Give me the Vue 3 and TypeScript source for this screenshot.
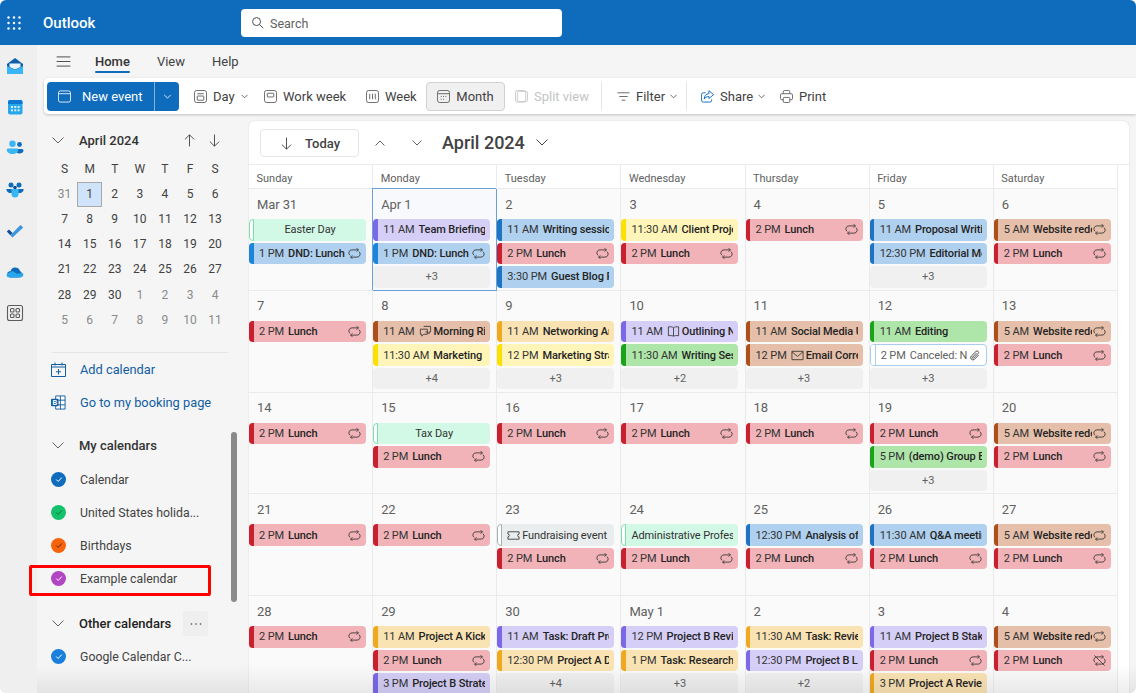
<script setup lang="ts">
type Kind = 'red' | 'blue' | 'sky' | 'purple' | 'brown' | 'yellow' | 'amber' | 'green' | 'holiday' | 'grey' | 'cancel'
type Ev = { k: Kind; t?: string; n: string; r?: 'loop' | 'off' | 'clip'; ic?: string; mid?: boolean }
type Day = { d: string; ev: Ev[]; more?: number; sel?: boolean }

const loopPath = 'M9.3 1.2 11.2 3.1 9.3 5M11.2 3.1H4.300a3.300 3.300 0 0 0-2.100 5.900M4.700 12.800 2.800 10.900l1.900-1.900M2.800 10.900h6.900a3.300 3.300 0 0 0 2.100-5.900'
const icons: Record<string, string> = {
  loop: loopPath,
  off: loopPath + 'M1.500 1.500l11 11',
  clip: 'M11.5 6.5 7 11a2.4 2.4 0 0 1-3.4-3.4l5-5a1.6 1.6 0 0 1 2.3 2.3l-5 5a.8.8 0 0 1-1.1-1.1l4.4-4.4',
  chat: 'M5 1.5h7.5v6H11v2L9 7.5H7M1.5 4.5H9v5.500H5L3 12V9.999H1.500z',
  book: 'M7 3v9M7 3C6 2 4 1.800 1.500 2v9.500c2.500-.2 4.500 0 5.500.5 1-.5 3-.7 5.500-.5V2C10 1.800 8 2 7 3z',
  mail: 'M1 2.500h12v9H1zM1 3l6 5 6-5',
  ticket: 'M1 3h12v2.500a1.500 1.500 0 0 0 0 3V11H1V8.500a1.500 1.500 0 0 0 0-3z',
}

const lunch: Ev = { k: 'red', t: '2 PM', n: 'Lunch', r: 'loop' }
const site: Ev = { k: 'brown', t: '5 AM', n: 'Website redesign', r: 'loop' }
const dnd: Ev = { k: 'sky', t: '1 PM', n: 'DND: Lunch', r: 'loop' }

const days: Day[] = [
  { d: 'Mar 31', ev: [{ k: 'holiday', n: 'Easter Day', mid: true }, dnd] },
  { d: 'Apr 1', sel: true, ev: [{ k: 'purple', t: '11 AM', n: 'Team Briefing' }, dnd], more: 3 },
  { d: '2', ev: [{ k: 'blue', t: '11 AM', n: 'Writing session' }, lunch, { k: 'blue', t: '3:30 PM', n: 'Guest Blog Post' }] },
  { d: '3', ev: [{ k: 'yellow', t: '11:30 AM', n: 'Client Project' }, lunch] },
  { d: '4', ev: [lunch] },
  { d: '5', ev: [{ k: 'blue', t: '11 AM', n: 'Proposal Writing' }, { k: 'blue', t: '12:30 PM', n: 'Editorial Meeting' }], more: 3 },
  { d: '6', ev: [site, lunch] },

  { d: '7', ev: [lunch] },
  { d: '8', ev: [{ k: 'brown', t: '11 AM', ic: 'chat', n: 'Morning Ritual' }, { k: 'yellow', t: '11:30 AM', n: 'Marketing Sync' }], more: 4 },
  { d: '9', ev: [{ k: 'amber', t: '11 AM', n: 'Networking Analysis' }, { k: 'yellow', t: '12 PM', n: 'Marketing Strategy' }], more: 3 },
  { d: '10', ev: [{ k: 'purple', t: '11 AM', ic: 'book', n: 'Outlining New' }, { k: 'green', t: '11:30 AM', n: 'Writing Session' }], more: 2 },
  { d: '11', ev: [{ k: 'brown', t: '11 AM', n: 'Social Media Update' }, { k: 'brown', t: '12 PM', ic: 'mail', n: 'Email Correspondence' }], more: 3 },
  { d: '12', ev: [{ k: 'green', t: '11 AM', n: 'Editing' }, { k: 'cancel', t: '2 PM', n: 'Canceled: New', r: 'clip' }], more: 3 },
  { d: '13', ev: [site, lunch] },

  { d: '14', ev: [lunch] },
  { d: '15', ev: [{ k: 'holiday', n: 'Tax Day', mid: true }, lunch] },
  { d: '16', ev: [lunch] },
  { d: '17', ev: [lunch] },
  { d: '18', ev: [lunch] },
  { d: '19', ev: [lunch, { k: 'green', t: '5 PM', n: '(demo) Group Event' }], more: 3 },
  { d: '20', ev: [site, lunch] },

  { d: '21', ev: [lunch] },
  { d: '22', ev: [lunch] },
  { d: '23', ev: [{ k: 'grey', ic: 'ticket', n: 'Fundraising event' }, lunch] },
  { d: '24', ev: [{ k: 'holiday', n: 'Administrative Professionals Day' }, lunch] },
  { d: '25', ev: [{ k: 'blue', t: '12:30 PM', n: 'Analysis of' }, lunch] },
  { d: '26', ev: [{ k: 'blue', t: '11:30 AM', n: 'Q&A meeting' }, lunch] },
  { d: '27', ev: [site, lunch] },

  { d: '28', ev: [lunch] },
  { d: '29', ev: [{ k: 'amber', t: '11 AM', n: 'Project A Kickoff' }, lunch, { k: 'purple', t: '3 PM', n: 'Project B Strategy' }] },
  { d: '30', ev: [{ k: 'purple', t: '11 AM', n: 'Task: Draft Proposal' }, { k: 'amber', t: '12:30 PM', n: 'Project A Design' }], more: 4 },
  { d: 'May 1', ev: [{ k: 'purple', t: '12 PM', n: 'Project B Review' }, { k: 'amber', t: '1 PM', n: 'Task: Research competitors' }], more: 3 },
  { d: '2', ev: [{ k: 'amber', t: '11:30 AM', n: 'Task: Review' }, { k: 'purple', t: '12:30 PM', n: 'Project B Launch' }], more: 2 },
  { d: '3', ev: [{ k: 'purple', t: '11 AM', n: 'Project B Stakeholder' }, lunch, { k: 'amber', t: '3 PM', n: 'Project A Review' }] },
  { d: '4', ev: [site, { ...lunch, r: 'off' }] },
]

const weekdays = ['Sunday', 'Monday', 'Tuesday', 'Wednesday', 'Thursday', 'Friday', 'Saturday']
const miniHead = ['S', 'M', 'T', 'W', 'T', 'F', 'S']
const mini = [
  31, 1, 2, 3, 4, 5, 6, 7, 8, 9, 10, 11, 12, 13, 14, 15, 16, 17, 18, 19, 20,
  21, 22, 23, 24, 25, 26, 27, 28, 29, 30, 1, 2, 3, 4, 5, 6, 7, 8, 9, 10, 11,
]
const outside = (i: number) => i === 0 || i > 30

const myCals = [
  { name: 'Calendar', color: '#0f6cbd', tick: '#fff' },
  { name: 'United States holida...', color: '#13c16a', tick: '#173' },
  { name: 'Birthdays', color: '#f7630c', tick: '#522' },
  { name: 'Example calendar', color: '#b146c2', tick: '#fff' },
]
</script>

<template>
  <div class="app">
    <header class="topbar">
      <svg class="waffle" viewBox="0 0 14 14" fill="#fff">
        <template v-for="y in [1.500, 7, 12.500]" :key="y">
          <circle v-for="x in [1.500, 7, 12.500]" :key="x" :cx="x" :cy="y" r="1.200" />
        </template>
      </svg>
      <span class="brand">Outlook</span>
      <div class="search">
        <svg viewBox="0 0 14 14" fill="none" stroke="#424242"><circle cx="6" cy="6" r="4.300" /><path d="m9.200 9.200 4 4" /></svg>
        <span>Search</span>
      </div>
    </header>

    <div class="body">
      <nav class="rail">
        <div class="rail-item">
          <svg viewBox="0 0 18 18">
            <path d="M1 7 9 1l8 6v8.500a1.500 1.500 0 0 1-1.500 1.500h-13A1.500 1.500 0 0 1 1 15.500z" fill="#0f5fa8" />
            <path d="M3.500 6.500h11V10L9 12.500 3.500 10z" fill="#e8f3fc" />
            <path d="M1 9l8 4 8-4v6.500a1.500 1.500 0 0 1-1.500 1.500h-13A1.500 1.500 0 0 1 1 15.500z" fill="#38b6f5" />
          </svg>
        </div>
        <div class="rail-item">
          <svg viewBox="0 0 18 18">
            <rect x="2" y="2" width="14.500" height="14.500" rx="2" fill="#28a8ea" />
            <path d="M2 6V4a2 2 0 0 1 2-2h10.500a2 2 0 0 1 2 2v2z" fill="#0f78d4" />
            <g fill="#d8effc"><rect x="5" y="8" width="2" height="2" /><rect x="8.300" y="8" width="2" height="2" /><rect x="11.600" y="8" width="2" height="2" /><rect x="5" y="11.300" width="2" height="2" /><rect x="8.300" y="11.300" width="2" height="2" /><rect x="11.600" y="11.300" width="2" height="2" /></g>
          </svg>
        </div>
        <div class="rail-item">
          <svg viewBox="0 0 18 18">
            <circle cx="6.500" cy="4.800" r="3.200" fill="#38b6f5" />
            <circle cx="13.500" cy="5.500" r="2.400" fill="#0f6cbd" />
            <path d="M10 10h6a1.500 1.500 0 0 1 1.500 1.500c0 2-2 3-4 3s-3-.8-3.500-2z" fill="#0f6cbd" />
            <path d="M2 9.500h9a1.300 1.300 0 0 1 1.300 1.300c0 2.500-2.500 4.200-5.800 4.200S.800 13.300.800 10.800A1.300 1.300 0 0 1 2 9.500z" fill="#38b6f5" />
          </svg>
        </div>
        <div class="rail-item">
          <svg viewBox="0 0 18 18">
            <circle cx="5" cy="4" r="2.500" fill="#0f6cbd" />
            <circle cx="13" cy="4" r="2.500" fill="#0f6cbd" />
            <path d="M1 8h16c.5 0 .8.400.6 1-.5 1.500-1.500 2.500-3 3H3.400C2 11.500 1 10.500.4 9c-.2-.6.100-1 .6-1z" fill="#0f6cbd" />
            <path d="M5.500 8h7v5a3.500 3.500 0 0 1-7 0z" fill="#38b6f5" />
            <circle cx="9" cy="6.500" r="1.800" fill="#0a4f96" />
          </svg>
        </div>
        <div class="rail-item">
          <svg viewBox="0 0 18 18">
            <path d="M.800 9.500 3 7.500l3.500 3.500-2.200 2.200z" fill="#0f4f96" />
            <path d="M6.500 15.500 4.300 13.200 14.500 3l2.700 2.500z" fill="#3a96dd" />
          </svg>
        </div>
        <div class="rail-item">
          <svg viewBox="0 0 20 18">
            <path d="M5 8.200A5.500 5.500 0 0 1 15.400 7.500 4 4 0 0 1 14 15H4.500A3.300 3.300 0 0 1 5 8.200z" fill="#0f6cbd" />
            <path d="M1.500 14.500c-1.500-1.800-.700-4.200 1.500-4.800L7.500 8l4.500 3 6.500-.800c1.500 1.500.800 4.800-2.500 4.800H4.500c-1.300 0-2.400-.1-3-.5z" fill="#28a8ea" />
          </svg>
        </div>
        <div class="rail-item">
          <svg viewBox="0 0 18 18" fill="none" stroke="#5c5c5c" stroke-width="1.100">
            <rect x="1.500" y="1.500" width="15" height="15" rx="2" />
            <rect x="4.500" y="4.500" width="3.500" height="3.500" rx="1" />
            <rect x="10" y="4.500" width="3.500" height="3.500" rx="1" />
            <rect x="4.500" y="10" width="3.500" height="3.500" rx="1" />
            <rect x="10" y="10" width="3.500" height="3.500" rx="1" />
          </svg>
        </div>
      </nav>

      <div class="content">
        <div class="tabs">
          <svg class="burger" viewBox="0 0 16 12" stroke="#424242" fill="none"><path d="M.500 1h15M.500 6h15M.500 11h15" /></svg>
          <span class="tab tab--on">Home</span>
          <span class="tab">View</span>
          <span class="tab">Help</span>
        </div>

        <div class="toolbar">
          <div class="new-event">
            <div class="new-main">
              <svg class="ti" viewBox="0 0 14 14" fill="none" stroke="#fff" stroke-width=".9"><rect x=".500" y="1" width="13" height="12" rx="2" /><path d="M.500 4h13" /></svg>
              <span>New event</span>
            </div>
            <div class="new-caret">
              <svg viewBox="0 0 10 6" fill="none" stroke="#fff"><path d="m1 1 4 4 4-4" /></svg>
            </div>
          </div>

          <div class="tool tool--day">
            <svg class="ti" viewBox="0 0 14 14" fill="none" stroke="#616161"><rect x=".500" y=".500" width="13" height="13" rx="2.500" /><path d="M3.500 4h7" /><rect x="3.500" y="6.500" width="7" height="4.500" rx=".5" /></svg>
            <span>Day</span>
            <svg class="caret" viewBox="0 0 8 5" fill="none" stroke="#616161"><path d="m.500.500 3.500 3.500 3.500-3.500" /></svg>
          </div>
          <div class="tool tool--work">
            <svg class="ti" viewBox="0 0 14 14" fill="none" stroke="#616161"><rect x=".500" y=".500" width="13" height="13" rx="2.500" /><rect x="3.500" y="3.500" width="7" height="4" rx=".5" /></svg>
            <span>Work week</span>
          </div>
          <div class="tool tool--week">
            <svg class="ti" viewBox="0 0 14 14" fill="none" stroke="#616161"><rect x=".500" y=".500" width="13" height="13" rx="2.500" /><path d="M4 4v6M7 4v6M10 4v6" /></svg>
            <span>Week</span>
          </div>
          <div class="tool tool--month">
            <svg class="ti" viewBox="0 0 14 14" fill="none" stroke="#616161"><rect x=".500" y=".500" width="13" height="13" rx="2.500" /><path d="M1 4h12M4 7h1M6.500 7h1M9 7h1M4 10h1M6.500 10h1" /></svg>
            <span>Month</span>
          </div>
          <div class="tool tool--split">
            <svg class="ti" viewBox="0 0 14 14" fill="none" stroke="#c8c8c8"><rect x="2.500" y="1.500" width="11" height="11" rx="2" /><rect x=".500" y=".500" width="11" height="12.500" rx="2" /></svg>
            <span>Split view</span>
          </div>
          <i class="sep sep--a"></i>
          <div class="tool tool--filter">
            <svg class="ti" viewBox="0 0 14 14" fill="none" stroke="#616161"><path d="M.500 3h13M2.500 7h9M5 11h4" /></svg>
            <span>Filter</span>
            <svg class="caret" viewBox="0 0 8 5" fill="none" stroke="#616161"><path d="m.500.500 3.500 3.500 3.500-3.500" /></svg>
          </div>
          <i class="sep sep--b"></i>
          <div class="tool tool--share">
            <svg class="ti" viewBox="0 0 14 14" fill="none" stroke="#0f6cbd"><path d="M5 3H2.500a2 2 0 0 0-2 2v6a2 2 0 0 0 2 2h7a2 2 0 0 0 2-2v-1" /><path d="M8.500.800 13.500 5l-5 4.200V7c-2.500 0-4 .8-5 2.800 0-3.500 2-5.800 5-5.800z" /></svg>
            <span>Share</span>
            <svg class="caret" viewBox="0 0 8 5" fill="none" stroke="#616161"><path d="m.500.500 3.500 3.500 3.500-3.500" /></svg>
          </div>
          <div class="tool tool--print">
            <svg class="ti" viewBox="0 0 14 14" fill="none" stroke="#616161"><path d="M3.500 4V2a1.500 1.500 0 0 1 1.500-1.500h4A1.500 1.500 0 0 1 10.500 2v2" /><path d="M3.500 10.500H2A1.500 1.500 0 0 1 .500 9V5.500A1.500 1.500 0 0 1 2 4h10a1.500 1.500 0 0 1 1.500 1.500V9a1.500 1.500 0 0 1-1.500 1.500h-1.500" /><rect x="3.500" y="8" width="7" height="5.500" rx="1" /></svg>
            <span>Print</span>
          </div>
        </div>

        <div class="workspace">
          <aside class="side">
            <div class="mini-head">
              <svg class="chev" viewBox="0 0 12 7" fill="none" stroke="#616161"><path d="m.500.500 5.500 5.500 5.500-5.500" /></svg>
              <span class="mini-title">April 2024</span>
              <svg class="arrow" viewBox="0 0 12 14" fill="none" stroke="#424242"><path d="M6 13.500V1M1 5.800 6 .800l5 5" /></svg>
              <svg class="arrow" viewBox="0 0 12 14" fill="none" stroke="#424242"><path d="M6 .500V13M1 8.200l5 5 5-5" /></svg>
            </div>
            <div class="mini">
              <span v-for="(h, i) in miniHead" :key="i" class="mini-cell">{{ h }}</span>
              <span
                v-for="(n, i) in mini"
                :key="'d' + i"
                class="mini-cell"
                :class="{ 'mini-cell--out': outside(i), 'mini-cell--sel': i === 1 }"
              >{{ n }}</span>
            </div>
            <div class="rule"></div>
            <div class="link-row">
              <svg viewBox="0 0 15 15" fill="none" stroke="#115ea3"><path d="M.500 2.500h14v12H.500zM.500 5h14M4 .500v3M11 .500v3M7.500 7v5.500M5 9.800h5" /></svg>
              <span>Add calendar</span>
            </div>
            <div class="link-row">
              <svg viewBox="0 0 16 16"><path d="M5 1h10v14H5z" fill="#fff" stroke="#115ea3" /><path d="M5 5.500h10M5 10.500h10M10 1v14" stroke="#115ea3" fill="none" /><rect x="0" y="4" width="8" height="8" rx="1" fill="#115ea3" /><text x="4" y="10.500" font-size="7" font-weight="700" fill="#fff" text-anchor="middle" font-family="Liberation Sans, sans-serif">B</text></svg>
              <span>Go to my booking page</span>
            </div>

            <div class="group-head group-head--my">
              <svg class="chev" viewBox="0 0 12 7" fill="none" stroke="#616161"><path d="m.500.500 5.500 5.500 5.500-5.500" /></svg>
              <span>My calendars</span>
            </div>
            <div v-for="c in myCals" :key="c.name" class="cal-row">
              <span class="dot" :style="{ background: c.color }">
                <svg viewBox="0 0 10 8" fill="none" :stroke="c.tick" stroke-width="1.200"><path d="m1.500 4 2.500 2.500 4.500-5" /></svg>
              </span>
              <span>{{ c.name }}</span>
            </div>
            <div class="group-head group-head--other">
              <svg class="chev" viewBox="0 0 12 7" fill="none" stroke="#616161"><path d="m.500.500 5.500 5.500 5.500-5.500" /></svg>
              <span>Other calendars</span>
              <span class="dots">
                <svg viewBox="0 0 12 2" fill="#424242"><circle cx="1.500" cy="1" r=".8" /><circle cx="6" cy="1" r=".8" /><circle cx="10.500" cy="1" r=".8" /></svg>
              </span>
            </div>
            <div class="cal-row">
              <span class="dot" style="background: #1a7fdc">
                <svg viewBox="0 0 10 8" fill="none" stroke="#fff" stroke-width="1.200"><path d="m1.500 4 2.500 2.500 4.500-5" /></svg>
              </span>
              <span>Google Calendar C...</span>
            </div>

            <!-- annotation and overlay scrollbar sit above the list -->
            <div class="red-box"></div>
            <div class="scroll-thumb"></div>
          </aside>

          <main class="panel">
            <div class="cal-bar">
              <div class="today">
                <svg viewBox="0 0 12 14" fill="none" stroke="#424242"><path d="M6 .500V13M1 8.200l5 5 5-5" /></svg>
                <span>Today</span>
              </div>
              <svg class="nav-up" viewBox="0 0 10 6" fill="none" stroke="#616161"><path d="m.500 5.500 4.500-4.500 4.500 4.500" /></svg>
              <svg class="nav-down" viewBox="0 0 10 6" fill="none" stroke="#616161"><path d="m.500.500 4.500 4.500 4.500-4.500" /></svg>
              <span class="cal-title">April 2024</span>
              <svg class="title-caret" viewBox="0 0 12 7" fill="none" stroke="#424242"><path d="m.500.500 5.500 5.500 5.500-5.500" /></svg>
            </div>

            <div class="grid">
              <div v-for="w in weekdays" :key="w" class="wd">{{ w }}</div>
              <div v-for="(day, i) in days" :key="i" class="cell" :class="{ 'cell--sel': day.sel }">
                <div class="num">{{ day.d }}</div>
                <div
                  v-for="(e, j) in day.ev"
                  :key="j"
                  class="ev"
                  :class="['ev--' + e.k, { 'ev--mid': e.mid }]"
                >
                  <span class="ev-text">
                    <span v-if="e.t" class="ev-time">{{ e.t }}</span>
                    <svg v-if="e.ic" class="ev-ic" viewBox="0 0 14 14" fill="none" stroke="#333" stroke-width=".9"><path :d="icons[e.ic]" /></svg>
                    <span class="ev-name">{{ e.n }}</span>
                  </span>
                  <svg v-if="e.r" class="ev-flag" viewBox="0 0 14 14" fill="none" stroke="#333" stroke-width=".9"><path :d="icons[e.r]" /></svg>
                </div>
                <div v-if="day.more" class="more">+{{ day.more }}</div>
              </div>
            </div>
          </main>
        </div>
      </div>
    </div>
    <div class="bottom-fade"></div>
  </div>
</template>

<style>
html, body { margin: 0; background: #fff; }
</style>

<style scoped>
.app {
  width: 1136px;
  height: 693px;
  position: relative;
  overflow: hidden;
  display: flex;
  flex-direction: column;
  background: #f5f5f5;
  border-radius: 6px;
  font-family: Roboto, "Noto Sans", sans-serif;
  color: #424242;
  font-size: 13px;
}

/* === Top bar === */
.topbar {
  height: 45px;
  flex: none;
  background: #0f6cbd;
  display: flex;
  align-items: center;
  color: #fff;
}
.waffle { width: 14px; height: 14px; margin-left: 7px; }
.brand { margin-left: 22px; width: 198px; font-size: 15px; font-weight: 500; padding-top: 1px; }
.search {
  width: 321px;
  height: 28px;
  background: #fff;
  border-radius: 4px;
  display: flex;
  align-items: center;
  color: #616161;
  font-size: 12.500px;
}
.search span { padding-top: 1px; }
.search svg { width: 13px; height: 13px; margin: 0 6px 0 10px; }

.body { flex: 1; display: flex; min-height: 0; }

/* === App rail === */
.rail { width: 37px; flex: none; background: #efefef; }
.rail-item { width: 29px; height: 41.3px; display: flex; align-items: center; justify-content: center; }
.rail-item svg { width: 18px; height: 18px; }

.content { flex: 1; min-width: 0; display: flex; flex-direction: column; }

/* === Tabs === */
.tabs { height: 33px; flex: none; display: flex; align-items: center; position: relative; padding-bottom: 1px; box-sizing: border-box; }
.burger { width: 15px; height: 11px; margin: 0 24px 0 19px; }
.tab { margin-right: 27px; position: relative; color: #424242; }
.tab--on { font-weight: 500; color: #333; }
.tab--on::after {
  content: '';
  position: absolute;
  left: 0;
  right: 0;
  bottom: -4px;
  height: 2px;
  background: #0f6cbd;
  border-radius: 1px;
}

/* === Toolbar === */
.toolbar {
  height: 36px;
  flex: none;
  margin-left: 7px;
  margin-bottom: 7px;
  padding-left: 3px;
  background: #fff;
  border-radius: 4px 0 0 4px;
  box-shadow: 0 1px 3px rgba(0, 0, 0, .22);
  display: flex;
  align-items: center;
}
.new-event {
  width: 132px;
  height: 29px;
  background: #0f6cbd;
  border-radius: 4px;
  display: flex;
  color: #fff;
  margin-right: 15px;
}
.new-main { width: 107px; display: flex; align-items: center; border-right: 1px solid #7fb2de; }
.new-main .ti { margin: 0 11px 0 11px; }
.new-caret { flex: 1; display: flex; align-items: center; justify-content: center; }
.new-caret svg { width: 9px; height: 5px; }
.tool { display: flex; align-items: center; height: 29px; white-space: nowrap; color: #424242; flex: none; }
.ti { width: 13px; height: 13px; margin-right: 6px; flex: none; }
.caret { width: 7px; height: 5px; margin-left: auto; }
.tool--day { width: 54px; margin-right: 16px; }
.tool--work { width: 82px; margin-right: 20px; }
.tool--week { width: 50px; margin-right: 10px; }
.tool--month {
  width: 79px;
  box-sizing: border-box;
  justify-content: center;
  background: #f0f0f0;
  border: 1px solid #d1d1d1;
  border-radius: 4px;
  margin-right: 10px;
}
.tool--split { color: #c4c4c4; width: 72px; }
.tool--filter { width: 60px; }
.tool--share { width: 64px; margin-right: 15px; }
.sep { width: 1px; height: 28px; background: #e6e6e6; flex: none; }
.sep--a { margin: 0 15px 0 14px; }
.sep--b { margin: 0 14px 0 9px; }

.workspace { flex: 1; display: flex; min-height: 0; }

/* === Left column === */
.side { width: 212px; flex: none; position: relative; padding-top: 7px; box-sizing: border-box; }
.mini-head { height: 24px; display: flex; align-items: center; padding-left: 15px; }
.chev { width: 12px; height: 7px; flex: none; }
.mini-title { margin-left: 15px; width: 105px; font-weight: 500; color: #333; }
.arrow { width: 11px; height: 13px; margin-right: 14px; }
.mini {
  margin: 4.500px 0 0 15px;
  display: grid;
  grid-template-columns: repeat(7, 25.100px);
  grid-auto-rows: 25.100px;
  font-size: 12px;
}
.mini-cell { display: flex; align-items: center; justify-content: center; color: #424242; box-sizing: border-box; }
.mini-cell--out { color: #8a8a8a; }
.mini-cell--sel { background: #cfe4fa; border: 1px solid #a9a9a9; }
.rule { height: 1px; background: #e4e4e4; margin: 20px 21px 0 15px; }
.link-row { height: 33px; display: flex; align-items: center; padding-left: 14px; color: #115ea3; font-size: 12.800px; }
.link-row svg { width: 15px; height: 15px; margin-right: 14px; flex: none; }
.group-head { height: 33px; display: flex; align-items: center; padding-left: 15px; font-weight: 500; color: #333; }
.group-head span:first-of-type { margin-left: 15px; }
.group-head--my { margin-top: 10px; margin-bottom: 1px; }
.group-head--other { margin-top: 12px; color: #222; }
.group-head--other span:first-of-type { width: 104px; }
.dots {
  width: 25px;
  height: 25px;
  background: #efefef;
  border-radius: 2px;
  display: flex;
  align-items: center;
  justify-content: center;
}
.dots svg { width: 12px; height: 2px; }
.cal-row { height: 33px; display: flex; align-items: center; padding-left: 14px; white-space: nowrap; font-size: 12.300px; }
.dot { width: 15px; height: 15px; border-radius: 50%; margin-right: 14px; display: flex; align-items: center; justify-content: center; flex: none; }
.dot svg { width: 8px; height: 7px; }
.red-box {
  position: absolute;
  left: -8px;
  top: 444px;
  width: 182px;
  height: 31px;
  box-sizing: border-box;
  border: 3px solid #f00;
  border-radius: 2px;
}
.scroll-thumb {
  position: absolute;
  left: 194px;
  top: 311px;
  width: 6px;
  height: 170px;
  background: #8a8a8a;
  border-radius: 3px;
}

/* === Calendar panel === */
.panel {
  width: 880px;
  flex: none;
  background: #fff;
  border-radius: 6px 6px 0 0;
  box-shadow: 0 0 2px rgba(0, 0, 0, .12);
  overflow: hidden;
}
.cal-bar { height: 43px; display: flex; align-items: center; padding-left: 11px; }
.today {
  width: 99px;
  height: 28px;
  box-sizing: border-box;
  border: 1px solid #e6e6e6;
  border-radius: 4px;
  display: flex;
  align-items: center;
  margin-top: 1px;
  font-weight: 500;
  color: #424242;
}
.today svg { width: 11px; height: 13px; margin: 0 13px 0 20px; }
.nav-up, .nav-down { width: 10px; height: 6px; }
.nav-up { margin-left: 16px; }
.nav-down { margin-left: 27px; }
.cal-title { margin-left: 20px; font-size: 18px; font-weight: 500; color: #424242; }
.title-caret { width: 12px; height: 7px; margin-left: 11px; }

.grid {
  display: grid;
  grid-template-columns: repeat(7, 124.140px);
  grid-template-rows: 24px;
  grid-auto-rows: 101.750px;
  margin-left: -1px;
  border-top: 1px solid #ebebeb;
  border-left: 1px solid #ebebeb;
}
.wd {
  padding: 4px 0 0 7.500px;
  display: flex;
  align-items: center;
  font-size: 11px;
  color: #616161;
  border-right: 1px solid #ebebeb;
  border-bottom: 1px solid #ebebeb;
}
.cell {
  background: #fafafa;
  border-right: 1px solid #ebebeb;
  border-bottom: 1px solid #ebebeb;
  box-sizing: border-box;
  min-width: 0;
  overflow: hidden;
}
.cell--sel {
  background: #f8f9fc;
  border-color: #6aa0d6;
  box-shadow: -1px -1px 0 #6aa0d6;
  position: relative;
  z-index: 1;
}
.num { height: 30px; padding: 5.500px 0 0 8px; box-sizing: border-box; font-size: 13px; letter-spacing: -.1px; color: #616161; line-height: 20px; }

.ev {
  width: 117px;
  height: 21.500px;
  margin-bottom: 2px;
  border-radius: 4px;
  display: flex;
  align-items: center;
  box-sizing: border-box;
  padding: 0 5px 0 10px;
  font-size: 11px;
  letter-spacing: -.1px;
  color: #333;
  position: relative;
  overflow: hidden;
}
.ev::before {
  content: '';
  position: absolute;
  left: 0;
  top: 0;
  bottom: 0;
  width: 4.500px;
  background: var(--bar);
}
.ev-text { flex: 1; min-width: 0; overflow: hidden; white-space: nowrap; display: flex; align-items: center; }
.ev-time { margin-right: 4px; }
.ev-name { font-weight: 500; color: #242424; }
.ev-ic { width: 13px; height: 13px; margin-right: 2px; flex: none; }
.ev-flag { width: 13px; height: 13px; flex: none; margin-left: 1px; }
.ev--mid .ev-text { justify-content: center; }

.ev--red { background: #f1b3b7; --bar: #c9202f; }
.ev--blue { background: #afd0ee; --bar: #1e73c3; }
.ev--sky { background: #afd0ee; --bar: #1b85d9; }
.ev--purple { background: #d5cff7; --bar: #7b68e8; }
.ev--brown { background: #e5bfa9; --bar: #ac4f1b; }
.ev--yellow { background: #fff5b8; --bar: #fce100; }
.ev--amber { background: #fae3b3; --bar: #f0a91f; }
.ev--green { background: #aee5a9; --bar: #1ba31b; }
.ev--holiday { background: #d2f8e6; --bar: #fff; }
.ev--holiday::before { box-sizing: border-box; border: 1px solid #7fdcae; border-radius: 4px 0 0 4px; }
.ev--holiday .ev-name, .ev--grey .ev-name { font-weight: 400; color: #333; }
.ev--grey { background: #e9edee; --bar: #fff; }
.ev--grey::before { box-sizing: border-box; border: 1px solid #a8b0b2; border-radius: 4px 0 0 4px; }
.ev--cancel { background: #fff; --bar: #fff; border: 1px solid #a9cdec; color: #616161; }
.ev--cancel .ev-name { font-weight: 400; color: #616161; }
.ev--cancel::before { border-right: 1px solid #a9cdec; }

.more {
  width: 117px;
  height: 21.500px;
  border-radius: 4px;
  background: #f0f0f0;
  display: flex;
  align-items: center;
  justify-content: center;
  font-size: 11px;
  color: #616161;
}

.bottom-fade {
  position: absolute;
  left: 37px;
  right: 0;
  bottom: 0;
  height: 28px;
  background: linear-gradient(to bottom, rgba(0, 0, 0, 0), rgba(0, 0, 0, .07));
  pointer-events: none;
}
</style>
